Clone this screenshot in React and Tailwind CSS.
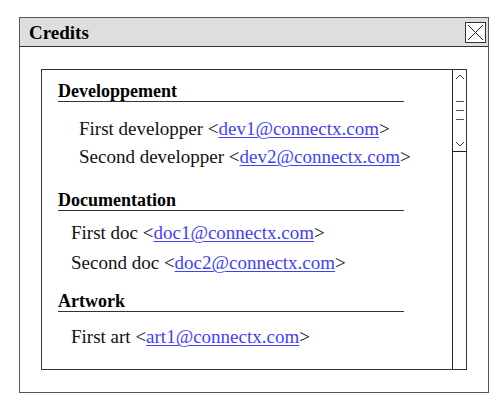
import React from "react";

const serif = { fontFamily: '"Liberation Serif", "Times New Roman", serif' };

function Link({ children }) {
  return <span className="text-[#3f3fff] underline decoration-1 underline-offset-2">{children}</span>;
}

function Heading({ children, mt }) {
  return (
    <div className={`ml-[16px] w-[346px] border-b-[1.5px] border-[#333] h-[32px] flex items-end ${mt}`}>
      <span className="font-bold text-[18px] leading-[20px] text-black">{children}</span>
    </div>
  );
}

function Item({ label, email, pl, mt }) {
  return (
    <div className={`text-[19px] leading-[22px] text-[#111] whitespace-nowrap ${pl} ${mt}`}>
      {label} &lt;<Link>{email}</Link>&gt;
    </div>
  );
}

export default function App() {
  return (
    <div className="w-[500px] h-[410px] bg-white relative" style={serif}>
      <div className="absolute left-[19px] top-[17px] w-[470px] h-[376px] border-[1.5px] border-[#555] bg-white flex flex-col">
        <div className="h-[29px] bg-[#dedede] border-b-[1.5px] border-[#333] flex items-center justify-between pl-[9px] pr-[2px]">
          <span className="font-bold text-[19px] leading-[22px] text-black pt-[1px]">Credits</span>
          <div className="w-[21px] h-[21px] border border-[#333] bg-white flex items-center justify-center">
            <svg width="17" height="17" viewBox="0 0 17 17">
              <path d="M1 1 L16 16 M16 1 L1 16" stroke="#222" strokeWidth="1" />
            </svg>
          </div>
        </div>
        <div className="flex-1 pl-[21px] pt-[22px]">
          <div className="w-[426px] h-[301px] border-[1.5px] border-[#333] flex">
            <div className="flex-1 flex flex-col overflow-hidden">
              <Heading mt="mt-0">Developpement</Heading>
              <Item label="First developper" email="dev1@connectx.com" pl="pl-[37px]" mt="mt-[16px]" />
              <Item label="Second developper" email="dev2@connectx.com" pl="pl-[37px]" mt="mt-[6px]" />
              <Heading mt="mt-[11px]">Documentation</Heading>
              <Item label="First doc" email="doc1@connectx.com" pl="pl-[29px]" mt="mt-[11px]" />
              <Item label="Second doc" email="doc2@connectx.com" pl="pl-[29px]" mt="mt-[8px]" />
              <Heading mt="mt-[6px]">Artwork</Heading>
              <Item label="First art" email="art1@connectx.com" pl="pl-[29px]" mt="mt-[14px]" />
            </div>
            <div className="w-[14px] border-l-[1.5px] border-[#222] flex flex-col">
              <div className="h-[82px] border-b-[1.5px] border-[#222] flex flex-col items-center justify-between py-[3px]">
                <svg width="10" height="8" viewBox="0 0 10 8"><path d="M1 6 L5 2 L9 6" stroke="#333" fill="none" strokeWidth="1" /></svg>
                <div className="flex flex-col gap-[8px] items-center">
                  <div className="w-[8px] h-[1px] bg-[#555]" />
                  <div className="w-[8px] h-[1px] bg-[#555]" />
                  <div className="w-[8px] h-[1px] bg-[#555]" />
                </div>
                <svg width="10" height="8" viewBox="0 0 10 8"><path d="M1 2 L5 6 L9 2" stroke="#333" fill="none" strokeWidth="1" /></svg>
              </div>
            </div>
          </div>
        </div>
      </div>
    </div>
  );
}
